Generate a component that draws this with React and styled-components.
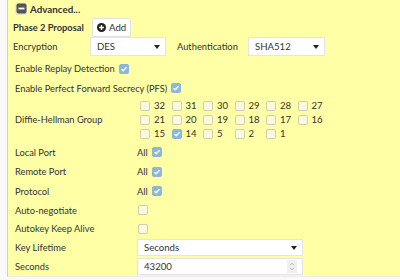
import React from 'react';
import styled, { createGlobalStyle } from 'styled-components';

const GlobalStyle = createGlobalStyle`
  html, body {
    margin: 0;
    padding: 0;
    background: #fafafa;
  }
  body {
    font-family: 'Lato', 'Liberation Sans', sans-serif;
    color: #333;
  }
`;

const Page = styled.div`
  width: 400px;
  height: 280px;
  overflow: hidden;
  padding-left: 7px;
  box-sizing: border-box;
`;

const Panel = styled.div`
  height: 277px;
  background: #ffffa6;
  border-left: 1px solid #cfcfcf;
  border-bottom: 1px solid #ececec;
  box-sizing: border-box;
  display: flex;
  flex-direction: column;
  padding: 1px 0 0 5px;
  font-size: 9.3px;
`;

const Header = styled.div`
  display: flex;
  align-items: center;
  gap: 3px;
  height: 16px;
  padding-left: 2px;
  font-weight: 700;
  font-size: 9.8px;
`;

const MinusBox = styled.span`
  width: 12px;
  height: 12px;
  border-radius: 2px;
  background: #e6e6c8;
  display: flex;
  align-items: center;
  justify-content: center;
`;

const Row = styled.div`
  display: flex;
  align-items: center;
  height: ${p => p.$h || 19}px;
  margin-top: ${p => p.$mt || 0}px;
  padding-left: ${p => p.$pl || 0}px;
`;

const Label = styled.span`
  width: ${p => (p.$w ? `${p.$w}px` : 'auto')};
  margin-right: ${p => p.$mr || 0}px;
  flex-shrink: 0;
  font-weight: ${p => (p.$bold ? 700 : 400)};
  white-space: nowrap;
`;

const Inline = styled.span`
  margin-right: 4px;
  white-space: nowrap;
`;

const Button = styled.button`
  height: 19px;
  width: 39px;
  padding: 0 0 0 4px;
  border: 1px solid #e2e2e2;
  background: #fff;
  border-radius: 2px;
  display: flex;
  align-items: center;
  gap: 3px;
  font-family: inherit;
  font-size: 9.6px;
  color: #333;
`;

const Select = styled.div`
  width: ${p => p.$w}px;
  height: ${p => p.$h || 19}px;
  box-sizing: border-box;
  background: #fff;
  border: 1px solid #e4e4e4;
  display: flex;
  align-items: center;
  justify-content: space-between;
  padding: 0 4px 0 6px;
  margin-right: ${p => p.$mr || 0}px;
  font-size: 9.6px;
`;

const Caret = styled.span`
  width: 0;
  height: 0;
  border-left: 3.5px solid transparent;
  border-right: 3.5px solid transparent;
  border-top: 4px solid #222;
  margin-right: 1px;
`;

const Spinner = styled.span`
  width: 10px;
  height: 13px;
  background: #f0f0f0;
  border-radius: 1px;
  display: flex;
  align-items: center;
  justify-content: center;
  margin-right: 1px;
`;

const Box = styled.span`
  width: 10px;
  height: 10px;
  box-sizing: border-box;
  border-radius: 2px;
  flex-shrink: 0;
  display: inline-flex;
  align-items: center;
  justify-content: center;
  background: ${p => (p.$on ? '#8db6d9' : '#fafae0')};
  border: 1px solid ${p => (p.$on ? '#8db6d9' : '#cfcfb0')};
`;

const Grid = styled.div`
  display: grid;
  grid-template-columns: repeat(6, 31.5px);
  grid-auto-rows: 14px;
  align-items: center;
  font-size: 9.6px;
`;

const Cell = styled.span`
  display: flex;
  align-items: center;
  gap: 4px;
`;

function Check({ on }) {
  return (
    <Box $on={on}>
      {on && (
        <svg width="8" height="8" viewBox="0 0 8 8">
          <path d="M1.5 4.2 L3.2 5.8 L6.5 2.2" stroke="#fff" strokeWidth="1.3" fill="none" />
        </svg>
      )}
    </Box>
  );
}

const groups = [
  [32, 0], [31, 0], [30, 0], [29, 0], [28, 0], [27, 0],
  [21, 0], [20, 0], [19, 0], [18, 0], [17, 0], [16, 0],
  [15, 0], [14, 1], [5, 0], [2, 0], [1, 0]
];

export default function App() {
  return (
    <Page>
      <GlobalStyle />
      <Panel>
        <Header>
          <MinusBox>
            <svg width="11" height="11" viewBox="0 0 11 11">
              <rect x="0.5" y="0.5" width="10" height="10" rx="2" fill="#555" />
              <rect x="2.5" y="4.6" width="6" height="1.8" fill="#fff" />
            </svg>
          </MinusBox>
          Advanced...
        </Header>
        <Row $h={19} $mt={1}>
          <Label $w={79} $bold>Phase 2 Proposal</Label>
          <Button>
            <svg width="9" height="9" viewBox="0 0 10 10">
              <circle cx="5" cy="5" r="5" fill="#222" />
              <path d="M5 2.3 V7.7 M2.3 5 H7.7" stroke="#fff" strokeWidth="1.6" />
            </svg>
            Add
          </Button>
        </Row>
        <Row $h={20}>
          <Label $w={77}>Encryption</Label>
          <Select $w={76} $mr={11}>DES<Caret /></Select>
          <Label $w={71}>Authentication</Label>
          <Select $w={77}>SHA512<Caret /></Select>
        </Row>
        <Row $h={20} $mt={2} $pl={2}>
          <Inline>Enable Replay Detection</Inline>
          <Check on />
        </Row>
        <Row $h={20} $pl={2}>
          <Inline>Enable Perfect Forward Secrecy (PFS)</Inline>
          <Check on />
        </Row>
        <Row $h={43} $pl={2}>
          <Label $w={125}>Diffie-Hellman Group</Label>
          <Grid>
            {groups.map(([n, on]) => (
              <Cell key={n}>
                <Check on={!!on} />
                {n}
              </Cell>
            ))}
          </Grid>
        </Row>
        <Row $h={19} $mt={2} $pl={2}>
          <Label $w={122}>Local Port</Label>
          <Inline>All</Inline>
          <Check on />
        </Row>
        <Row $h={20} $pl={2}>
          <Label $w={122}>Remote Port</Label>
          <Inline>All</Inline>
          <Check on />
        </Row>
        <Row $h={19} $pl={2}>
          <Label $w={122}>Protocol</Label>
          <Inline>All</Inline>
          <Check on />
        </Row>
        <Row $h={19} $pl={2}>
          <Label $w={123}>Auto-negotiate</Label>
          <Check />
        </Row>
        <Row $h={19} $pl={2}>
          <Label $w={123}>Autokey Keep Alive</Label>
          <Check />
        </Row>
        <Row $h={19} $pl={2}>
          <Label $w={122}>Key Lifetime</Label>
          <Select $w={166} $h={17}>Seconds<Caret /></Select>
        </Row>
        <Row $h={19} $pl={2}>
          <Label $w={122}>Seconds</Label>
          <Select $w={166} $h={17}>
            43200
            <Spinner>
              <svg width="6" height="9" viewBox="0 0 6 9">
                <path d="M1 3.2 L3 1.2 L5 3.2 M1 5.8 L3 7.8 L5 5.8" stroke="#aaa" strokeWidth="0.8" fill="none" />
              </svg>
            </Spinner>
          </Select>
        </Row>
      </Panel>
    </Page>
  );
}
